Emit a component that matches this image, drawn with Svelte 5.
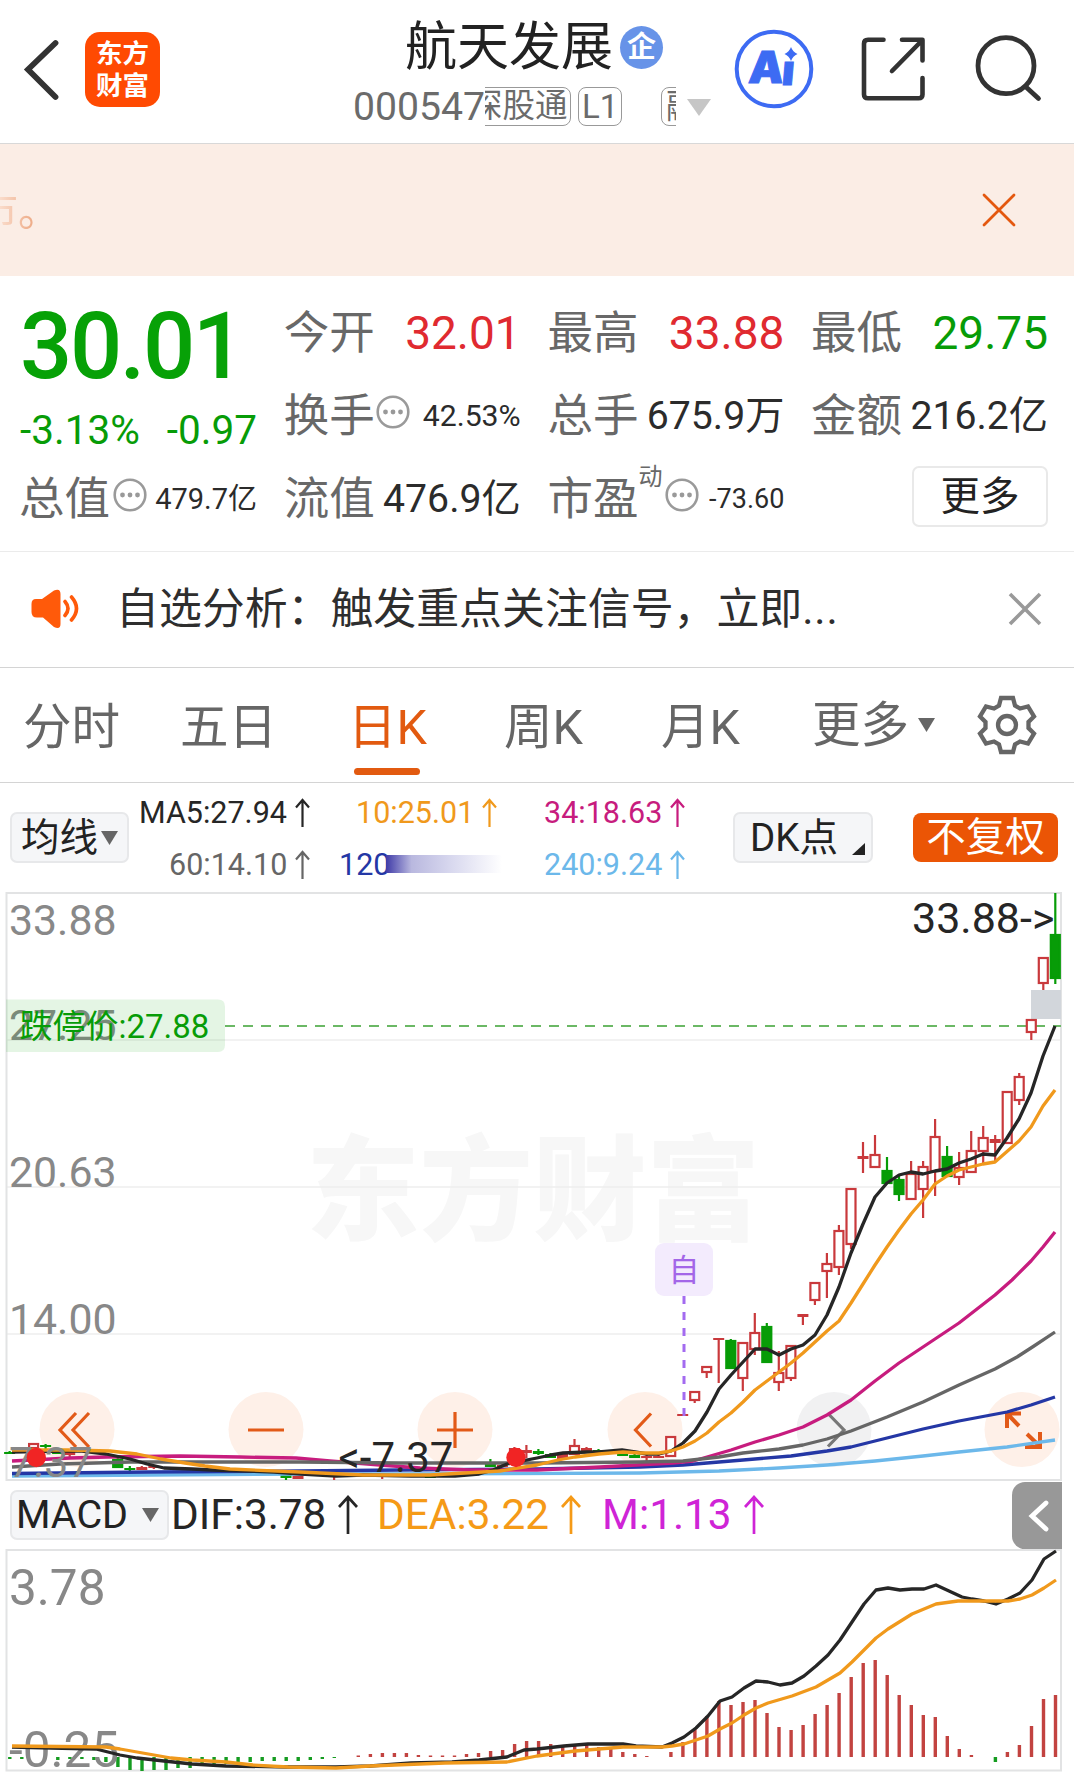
<script lang="ts">
  type Candle = [k: number, high: number, top: number, bottom: number, low: number, up?: boolean];

  const STEP = 12.02;
  const LAST_X = 1055.3;
  const xAt = (k: number) => +(LAST_X - k * STEP).toFixed(1);

  const quotes = [
    { cells: [
      { label: '今开', value: '32.01', tone: 'red', size: 'lg' },
      { label: '最高', value: '33.88', tone: 'red', size: 'lg' },
      { label: '最低', value: '29.75', tone: 'green', size: 'lg' },
    ] },
    { cells: [
      { label: '换手', value: '42.53%', tone: '', size: 'sm', info: true },
      { label: '总手', value: '675.9万', tone: '', size: 'md' },
      { label: '金额', value: '216.2亿', tone: '', size: 'md' },
    ] },
  ];

  const averages = [
    { text: 'MA5:27.94', cls: 'ma5' },
    { text: '10:25.01', cls: 'ma10' },
    { text: '34:18.63', cls: 'ma34' },
    { text: '60:14.10', cls: 'ma60' },
    { text: '120', cls: 'ma120', masked: true },
    { text: '240:9.24', cls: 'ma240' },
  ];

  const candles: Candle[] = [
    [0, 893, 934, 979, 984, false],
    [1, 957, 957, 984, 990, true],
    [2, 1019, 1019, 1033, 1040, true],
    [3, 1073, 1076, 1101, 1105, true],
    [4, 1091, 1091, 1144, 1144, true],
    [5, 1135, 1139, 1143, 1161, true],
    [6, 1126, 1137, 1152, 1163, true],
    [7, 1131, 1150, 1173, 1173, true],
    [8, 1152, 1167, 1178, 1185, true],
    [9, 1146, 1156, 1177, 1177, false],
    [10, 1119, 1136, 1172, 1196, true],
    [11, 1161, 1166, 1190, 1218, true],
    [12, 1161, 1173, 1200, 1200, true],
    [13, 1176, 1179, 1195, 1201, false],
    [14, 1157, 1170, 1184, 1184, false],
    [15, 1135, 1154, 1168, 1168, true],
    [16, 1142, 1156, 1159, 1173, true],
    [17, 1188, 1188, 1245, 1249, true],
    [18, 1225, 1230, 1268, 1275, true],
    [19, 1253, 1263, 1272, 1298, true],
    [20, 1282, 1282, 1301, 1305, true],
    [21, 1314, 1314, 1317, 1325, true],
    [22, 1345, 1345, 1379, 1381, true],
    [23, 1351, 1372, 1383, 1391, true],
    [24, 1323, 1326, 1363, 1363, false],
    [25, 1313, 1332, 1350, 1355, true],
    [26, 1342, 1342, 1379, 1391, true],
    [27, 1339, 1340, 1369, 1369, false],
    [28, 1338, 1338, 1340, 1383, true],
    [29, 1366, 1366, 1373, 1378, true],
    [30, 1391, 1391, 1401, 1403, true],
    [31, 1414, 1414, 1416, 1416, true],
    [32, 1436, 1436, 1457, 1457, true],
    [33, 1455, 1456, 1458, 1458, true],
    [34, 1454, 1456, 1458, 1461, true],
    [35, 1454, 1455, 1458, 1458, false],
    [36, 1452, 1453, 1456, 1456, false],
    [37, 1450, 1450, 1453, 1453, false],
    [38, 1449, 1450, 1452, 1452, false],
    [39, 1447, 1448, 1451, 1451, true],
    [40, 1439, 1445, 1455, 1455, true],
    [41, 1454, 1454, 1459, 1459, true],
    [42, 1453, 1454, 1458, 1458, false],
    [43, 1449, 1451, 1454, 1455, false],
    [44, 1445, 1450, 1453, 1458, true],
    [45, 1447, 1448, 1451, 1451, true],
    [46, 1464, 1465, 1467, 1467, true],
    [47, 1459, 1462, 1467, 1467, false],
    [50, 1475, 1476, 1477, 1477, true],
    [51, 1475, 1476, 1477, 1477, true],
    [52, 1474, 1476, 1478, 1478, false],
    [56, 1475, 1476, 1477, 1479, true],
    [60, 1475, 1476, 1477, 1480, true],
    [63, 1476, 1476, 1479, 1479, true],
    [64, 1474, 1475, 1478, 1480, false],
    [75, 1465, 1466, 1468, 1469, true],
    [76, 1466, 1467, 1470, 1470, true],
    [77, 1466, 1468, 1470, 1471, false],
    [78, 1458, 1459, 1468, 1468, false],
    [82, 1452, 1452, 1455, 1458, true],
    [83, 1451, 1452, 1454, 1454, false],
    [84, 1444, 1445, 1447, 1449, false],
    [85, 1443, 1443, 1449, 1449, true],
    [87, 1451, 1452, 1454, 1454, false],
  ];

  const lines = [
    { cls: 'ma240', pts: '12,1476 150,1475 300,1474 400,1474 640,1473 719,1471 779,1468 827,1465 875,1461 923,1456 959,1452 1007,1447 1055,1440' },
    { cls: 'ma120', pts: '12,1473.5 150,1472 300,1471 400,1470 537,1469 640,1467 683,1465 743,1460 791,1456 827,1451 851,1447 887,1438 923,1429 959,1421 1007,1412 1031,1405 1055,1397' },
    { cls: 'ma34', pts: '12,1461 70,1458 107,1457 180,1456 240,1457 296,1458 330,1461 380,1465 420,1468 470,1470 537,1470 600,1467 673,1463 693,1461 707,1457 731,1450 755,1442 779,1435 803,1427 827,1415 851,1400 875,1381 899,1363 935,1339 959,1323 995,1295 1012,1280 1031,1261 1043,1247 1055,1232' },
    { cls: 'ma60', pts: '12,1467 60,1464 130,1462 300,1462 400,1463 537,1463 640,1462 683,1461 719,1457 743,1453 779,1449 803,1445 827,1439 851,1431 887,1417 923,1402 959,1385 995,1369 1017,1357 1034,1346 1055,1332' },
    { cls: 'ma5', pts: '12,1452 65,1451 82,1451 106,1454 130,1459 147,1464 164,1468 192,1469 212,1470 274,1472 301,1474 336,1476 363,1475 411,1476 455,1476 479,1474 493,1470 507,1464 537,1458 551,1455 563,1453 587,1452 599,1452 622,1450 635,1452 647,1454 659,1454 671,1451 683,1443 695,1431 707,1412 719,1389 731,1375 743,1362 755,1349 767,1349 779,1355 791,1349 803,1345 815,1335 827,1315 839,1287 851,1253 863,1224 875,1197 887,1183 899,1175 911,1172 923,1174 935,1171 947,1169 959,1163 971,1159 983,1154 995,1155 1007,1138 1019,1119 1031,1093 1043,1056 1055,1026' },
    { cls: 'ma10', pts: '12,1450 68,1450 110,1451 137,1454 161,1459 185,1463 205,1466 230,1469 300,1472 363,1475 430,1475 500,1471 537,1465 558,1460 575,1457 599,1454 623,1452 640,1453 659,1453 671,1451 683,1447 695,1441 707,1433 719,1422 731,1413 743,1402 755,1390 767,1381 779,1372 791,1363 803,1353 815,1342 827,1331 839,1321 851,1303 863,1284 875,1265 887,1247 899,1230 911,1214 923,1200 935,1184 947,1176 959,1170 971,1167 983,1164 995,1162 1019,1141 1031,1127 1043,1106 1055,1090' },
  ];

  const ZERO = 1757;
  // Histogram values in pixels above (+) or below (-) the zero line, newest first.
  const bars = [
    62, 58, 31, 12, 5, -5, 0, 2, 8, 21, 40, 42, 52, 62, 82, 97, 94, 80, 64, 52, 43, 32, 27, 30, 44, 57, 55, 52,
    56, 41, 28, 15, 5, 0, 1, 3, 5, 8, 10, 13, 13, 12, 13, 16, 16, 13, 7, 6, 4, 3, 1.5, 1.5, 1.5, 2, 4, 4, 4, 3,
    1.5, 0, -1, -2, -3, -4, -4, -4, -4, -5, -7, -7, -9, -9, -11, -11, -13, -13, -14, -13, -10, -5, -3, -2, -2,
    -3, 0, 0, -2, -2,
  ];
  const dif = '12,1747 51,1748 96,1749 120,1755 137,1758 164,1761 192,1764 226,1766 288,1767 336,1767 370,1766 411,1763 452,1762 479,1760 507,1757 524,1750 537,1749 564,1746 588,1744 623,1744 636,1746 662,1747 672,1743 684,1737 696,1728 708,1716 720,1701 732,1697 744,1688 756,1681 768,1682 780,1685 792,1683 804,1676 816,1666 828,1655 840,1640 852,1622 864,1604 876,1590 888,1588 900,1590 912,1589 924,1589 936,1585 962,1597 972,1599 984,1601 996,1604 1008,1599 1020,1593 1032,1580 1044,1559 1056,1551';
  const dea = '12,1746 106,1747 120,1749 154,1755 171,1758 192,1760 226,1762 253,1765 288,1767 336,1768 370,1766 445,1763 507,1762 537,1756 575,1751 623,1747 662,1747 672,1746 684,1744 696,1740 708,1736 720,1729 732,1723 744,1715 756,1708 768,1703 792,1696 816,1687 840,1673 852,1662 876,1638 888,1629 912,1614 936,1604 958,1601 984,1601 1008,1601 1020,1599 1032,1595 1044,1588 1056,1580';

  const controls = [77, 266, 455, 645, 834, 1022];
</script>

{#snippet dots()}
  <svg class="dots" width="34" height="34" viewBox="0 0 34 34">
    <circle cx="17" cy="17" r="15.3" fill="none" stroke="#9a9a9a" stroke-width="2.6" />
    <g fill="#999"><circle cx="9.5" cy="17" r="2.4" /><circle cx="17" cy="17" r="2.4" /><circle cx="24.5" cy="17" r="2.4" /></g>
  </svg>
{/snippet}

{#snippet arrow(w: number, h: number, sw: number)}
  <svg class="arrow" width={w} height={h} viewBox="0 0 {w} {h}">
    <path d="M{w / 2} {h}V2M1 {w / 2 + 2}L{w / 2} 2L{w - 1} {w / 2 + 2}" fill="none" stroke="currentColor" stroke-width={sw} />
  </svg>
{/snippet}

<main class="page">
  <header class="top">
    <svg class="back" width="40" height="70" viewBox="22 35 40 70"><path d="M55.500 43L28 69.500L55.500 97" fill="none" stroke="#333" stroke-width="5.800" stroke-linecap="round" /></svg>
    <div class="logo"><span>东方</span><span>财富</span></div>
    <div class="heading">
      <div class="name"><h1>航天发展</h1><span class="corp">企</span></div>
      <div class="meta">
        <span class="code">000547</span>
        <div class="tags"><span class="tag first">深股通</span><span class="tag level">L1</span><span class="tag margin">融</span></div>
        <svg width="24" height="17" viewBox="0 0 24 17"><path d="M0 0H24L12 17Z" fill="#c6c6c6" /></svg>
      </div>
    </div>
    <svg class="ai" width="80" height="80" viewBox="734 29 80 80">
      <circle cx="774" cy="69" r="37.300" fill="none" stroke="#3d6bf3" stroke-width="4" />
      <g transform="skewX(-5)">
        <text x="755" y="83" class="ai-text">A</text>
        <text x="788.500" y="85.500" class="ai-text i">ı</text>
      </g>
      <path d="M791 47Q792.800 52 797.500 54Q792.800 56 791 61Q789.200 56 784.500 54Q789.200 52 791 47Z" fill="#3d6bf3" />
    </svg>
    <svg class="share" width="70" height="70" viewBox="858 34 70 70">
      <path d="M883.500 39.800H868Q864 39.800 864 43.800V94.500Q864 98.300 868 98.300H918.500Q922.500 98.300 922.500 94.500V78M902 39.800H922.500V60.500M922 40.500L892 71" fill="none" stroke="#333" stroke-width="4.600" stroke-linecap="round" stroke-linejoin="round" />
    </svg>
    <svg class="search" width="70" height="70" viewBox="974 34 70 70">
      <circle cx="1006" cy="65.700" r="28" fill="none" stroke="#333" stroke-width="4.800" /><path d="M1026 87L1038.500 98.500" stroke="#333" stroke-width="4.800" stroke-linecap="round" />
    </svg>
  </header>

  <section class="banner">
    <div class="ticker">市。</div>
    <svg width="34" height="34" viewBox="0 0 34 34"><path d="M2 2L32 32M32 2L2 32" stroke="#e4580f" stroke-width="2.800" stroke-linecap="round" /></svg>
  </section>

  <section class="quote">
    <div class="price">30.01</div>
    {#each quotes[0].cells as c}
      <div class="cell"><span class="label">{c.label}</span><span class="value {c.size} {c.tone}">{c.value}</span></div>
    {/each}
    <div class="change"><span>-3.13%</span><span>-0.97</span></div>
    {#each quotes[1].cells as c}
      <div class="cell"><span class="label">{c.label}</span>{#if c.info}{@render dots()}{/if}<span class="value {c.size}">{c.value}</span></div>
    {/each}
    <div class="cell total"><span class="label">总值</span>{@render dots()}<span class="value s29">479.7亿</span></div>
    <div class="cell"><span class="label">流值</span><span class="value md">476.9亿</span></div>
    <div class="cell"><span class="label">市盈</span><sup>动</sup>{@render dots()}<span class="value s27">-73.60</span></div>
    <div class="cell end"><button class="more">更多</button></div>
  </section>

  <section class="notice">
    <svg width="50" height="42" viewBox="30 588 50 42">
      <path d="M36 599H42L54 590.500Q60.500 588 60.500 594V624Q60.500 630 54 627L43 617.500H37Q31.500 617.500 31.500 612V604Q31.500 599 36 599Z" fill="#ff5a0a" />
      <path d="M65 601.500Q71 608.500 65 615.500M71.500 597Q81.500 608.500 71.500 620" fill="none" stroke="#ff5a0a" stroke-width="3.600" stroke-linecap="round" />
    </svg>
    <p>自选分析：触发重点关注信号，立即<span class="ellipsis">...</span></p>
    <svg width="34" height="34" viewBox="0 0 34 34"><path d="M2 2L32 32M32 2L2 32" stroke="#999" stroke-width="3.600" /></svg>
  </section>

  <nav class="tabs">
    <span class="t1">分时</span><span class="t2">五日</span><span class="t3 active">日K</span><span class="t4">周K</span><span class="t5">月K</span>
    <span class="t6">更多<svg width="17" height="14" viewBox="0 0 17 14"><path d="M0 0H17L8.500 14Z" fill="#666" /></svg></span>
    <svg class="gear" width="60" height="60" viewBox="-30 -30 60 60">
      <path d="M-6 -27H6L8 -19.500L13 -16.500L21 -18.500L27 -8.500L21.500 -3V3L27 8.500L21 18.500L13 16.500L8 19.500L6 27H-6L-8 19.500L-13 16.500L-21 18.500L-27 8.500L-21.500 3V-3L-27 -8.500L-21 -18.500L-13 -16.500L-8 -19.500Z" fill="none" stroke="#666" stroke-width="4.300" />
      <circle r="9" fill="none" stroke="#666" stroke-width="4.300" />
    </svg>
  </nav>

  <section class="indicators">
    <button class="pill ma-pick">均线<svg width="17" height="14" viewBox="0 0 17 14"><path d="M0 0H17L8.500 14Z" fill="#666" /></svg></button>
    <div class="averages">
      {#each averages as a}
        <span class="avg {a.cls}">{a.text}{#if a.masked}<i class="fade"></i>{:else}{@render arrow(15, 29, 2.2)}{/if}</span>
      {/each}
    </div>
    <button class="pill dk">DK点<svg width="13" height="12" viewBox="0 0 13 12"><path d="M13 0V12H0Z" fill="#222" /></svg></button>
    <button class="adjust">不复权</button>
  </section>

  <svg class="kline" width="1074" height="596" viewBox="0 885 1074 596">
    <text x="306" y="1231" class="watermark">东方财富</text>
    <path d="M6 1040H1061M6 1187H1061M6 1334H1061" stroke="#eeeeee" stroke-width="1.500" />
    <path d="M6.500 893V1480H1061V893Z" fill="none" stroke="#e2e3e4" stroke-width="2" />
    {#each controls as cx, i}
      <circle {cx} cy="1429.500" r="37.500" fill={i === 4 ? '#f1f1f2' : '#fef0e8'} />
    {/each}
    <g class="axis">
      <text x="9" y="935">33.88</text><text x="9" y="1040">27.25</text><text x="9" y="1187">20.63</text><text x="9" y="1334">14.00</text>
    </g>
    <path d="M6 999.500H218Q225 999.500 225 1006.500V1045Q225 1052 218 1052H6Z" fill="#09a109" fill-opacity=".11" />
    <path d="M225 1026H1061" stroke="#6bb865" stroke-width="1.800" stroke-dasharray="10 8" />
    <text x="19.500" y="1037.500" class="limit">跌停价:27.88</text>
    <rect x="1031" y="990" width="30" height="29" fill="#d2d6db" />
    <g class="icon" fill="none" stroke="#e25a18" stroke-width="3.200">
      <path d="M76 1413L60 1430L76 1447M89 1413L73 1430L89 1447" />
      <path d="M248 1430H284M437 1430H473M455 1412V1448" />
      <path d="M651 1413.500L635.500 1430L651 1446.500" />
      <path d="M828 1413.500L844 1430L828 1446.500" stroke="#777" />
      <path d="M1021 1413.500H1007V1428M1007.500 1414L1019 1426M1025 1447H1040V1432M1039.500 1446L1027 1434" stroke-width="4" />
    </g>
    {#each candles as [k, high, top, bottom, low, up]}
      {@const x = xAt(k)}
      <g stroke={up ? '#c9393c' : '#079c07'} stroke-width="2.200">
        {#if high < top}<path d="M{x} {high}V{top}" />{/if}
        {#if low > bottom}<path d="M{x} {bottom}V{low}" />{/if}
        {#if bottom - top > 5}
          <rect x={x - 4.500} y={top + 1} width="9" height={bottom - top - 2} fill={up ? '#fff' : '#079c07'} />
        {:else}
          <rect x={x - 5.500} y={top} width="11" height={bottom - top} fill={up ? '#c9393c' : '#079c07'} stroke="none" />
        {/if}
      </g>
    {/each}
    {#each lines as l}
      <polyline class="line {l.cls}" points={l.pts} />
    {/each}
    <text x="9" y="1476.500" class="low-axis">7.37</text>
    <circle cx="36.300" cy="1457.500" r="9.700" fill="#f12424" /><circle cx="516" cy="1457.500" r="9.700" fill="#f12424" />
    <text x="338.500" y="1472" class="mark low">&lt;-7.37</text>
    <text x="912" y="933" class="mark">33.88-&gt;</text>
    <path d="M684 1296V1416" stroke="#a36bf0" stroke-width="3" stroke-dasharray="8 8" />
    <rect x="655" y="1243" width="58" height="53" rx="9" fill="#f3ebfd" />
    <text x="684" y="1280.500" class="self">自</text>
  </svg>

  <section class="macd-bar">
    <button class="pill macd">MACD<svg width="17" height="14" viewBox="0 0 17 14"><path d="M0 0H17L8.500 14Z" fill="#666" /></svg></button>
    <span class="reading d1">DIF:3.78{@render arrow(20, 39, 2.7)}</span>
    <span class="reading d2">DEA:3.22{@render arrow(20, 39, 2.7)}</span>
    <span class="reading d3">M:1.13{@render arrow(20, 39, 2.7)}</span>
    <button class="drawer" aria-label="展开"><svg width="22" height="32" viewBox="0 0 22 32"><path d="M18 3L4 16L18 29" fill="none" stroke="#fff" stroke-width="4.800" stroke-linecap="round" /></svg></button>
  </section>

  <svg class="macd-chart" width="1074" height="228" viewBox="0 1549 1074 228">
    <path d="M6.500 1550H1061V1770.500H6.500Z" fill="none" stroke="#e2e3e4" stroke-width="2" />
    {#each bars as v, k}
      <rect x={xAt(k) - 1.500} y={v > 0 ? ZERO - v : ZERO} width="3.400" height={Math.abs(v)} fill={v > 0 ? '#c24340' : '#159c20'} />
    {/each}
    <g class="axis big"><text x="9" y="1605">3.78</text><text x="9" y="1766.500">-0.25</text></g>
    <polyline class="line ma5" points={dif} />
    <polyline class="line ma10" points={dea} />
  </svg>
</main>

<style>
  :global(body) { margin: 0; background: #fff; }
  .page { width: 1074px; height: 1777px; overflow: hidden; background: #fff; font-family: Roboto, 'Noto Sans CJK SC', sans-serif; color: #2b2b2b; }
  svg { display: block; flex: none; }
  button { border: 0; padding: 0; margin: 0; font: inherit; color: inherit; background: none; }
  .red { color: #e02a30; }
  .green { color: #079c07; }

  .top { box-sizing: border-box; height: 144px; border-bottom: 1px solid #d8d8d8; display: flex; align-items: flex-start; padding-left: 22px; }
  .back { margin-top: 35px; }
  .logo { box-sizing: border-box; width: 75px; height: 75px; margin: 32px 0 0 23px; border-radius: 15px; background: #ff4a02; color: #fff; font-family: 'Noto Sans CJK SC', sans-serif; font-weight: 700; font-size: 26.500px; line-height: 32px; display: flex; flex-direction: column; align-items: center; padding-top: 4px; }
  .heading { width: 360px; margin: 17px 0 0 194px; }
  .name { display: flex; align-items: center; height: 61px; padding-left: 51px; }
  h1 { margin: 0; font-size: 52px; line-height: 61px; font-weight: 400; color: #222; }
  .corp { width: 43px; height: 43px; margin-left: 7px; border-radius: 50%; background: #6793e8; color: #fff; font-size: 29px; line-height: 42px; font-weight: 700; text-align: center; }
  .meta { display: flex; align-items: center; height: 60px; color: #6b6b6b; margin-top: -1px; }
  .code { width: 132px; margin-left: -1px; flex: none; font-size: 39.200px; white-space: nowrap; }
  .tags { width: 191px; height: 40px; flex: none; overflow: hidden; display: flex; margin-right: 11px; }
  .tag { box-sizing: border-box; flex: none; height: 39px; border: 1.500px solid #999; border-radius: 8px; font-size: 33px; line-height: 37px; white-space: nowrap; }
  .first { width: 108px; margin-left: -22px; padding-left: 6px; font-size: 32.500px; }
  .level { width: 44px; margin-left: 7px; padding-left: 3px; }
  .margin { width: 80px; margin-left: 39px; padding-left: 4px; }
  .ai { margin: 29px 0 0 20px; }
  .ai-text { font: 900 44px Inter, sans-serif; fill: #3d6bf3; stroke: #3d6bf3; stroke-width: 1; }
  .ai-text.i { font-size: 42px; }
  .share { margin: 34px 0 0 44px; }
  .search { margin: 34px 0 0 46px; }

  .banner { box-sizing: border-box; height: 132px; background: #fbede5; display: flex; align-items: center; justify-content: space-between; padding-right: 58px; }
  .ticker { width: 60px; overflow: hidden; text-indent: -24px; white-space: nowrap; font-size: 42px; line-height: 56px; color: transparent; background: linear-gradient(90deg, #fadccb, #e3834f 60px); -webkit-background-clip: text; background-clip: text; padding-top: 4px; }

  .quote { box-sizing: border-box; height: 276px; border-bottom: 1px solid #ebebeb; padding: 15px 0 0 20px; display: grid; grid-template-columns: 237px 236px 236px 236px; grid-template-rows: 83px 83px 83px; column-gap: 27.700px; align-content: start; }
  .price { font-size: 92px; font-weight: 500; line-height: 111px; letter-spacing: -2.400px; color: #07a107; }
  .change { display: flex; justify-content: space-between; font-size: 40.500px; line-height: 112px; color: #079c07; height: 83px; }
  .cell { display: flex; align-items: center; height: 83px; white-space: nowrap; }
  .label { font-size: 45.500px; line-height: 60px; color: #686868; margin: 3px 0 0 -1px; }
  .value { margin-left: auto; line-height: 60px; }
  .lg { font-size: 46px; }
  .md { font-size: 39.200px; }
  .sm { font-size: 30.200px; }
  .s29 { font-size: 29px; }
  .s27 { font-size: 27px; }
  .dots { margin: -7px 0 0 1px; }
  .total .dots { margin-left: 3px; }
  sup { font-size: 24px; line-height: 28px; color: #686868; align-self: flex-start; margin-top: 6px; }
  sup + .dots { margin-left: 3px; }
  .end { justify-content: flex-end; }
  .more { box-sizing: border-box; width: 136px; height: 61px; border: 2px solid #e9e9e9; border-radius: 7px; font-size: 39.500px; line-height: 57px; color: #222; margin-top: -4px; }

  .notice { box-sizing: border-box; height: 116px; border-bottom: 1px solid #d4d4d4; display: flex; align-items: center; padding: 0 32px 2px 30px; }
  .notice p { margin: 0 auto 0 36px; font-size: 42.900px; line-height: 60px; color: #2e2e2e; white-space: nowrap; }
  .ellipsis { letter-spacing: .8px; }

  .tabs { box-sizing: border-box; height: 115px; border-bottom: 1px solid #d4d4d4; display: grid; grid-template-columns: 157px 168px 156px 157px 151px 140px 1fr; padding-left: 23px; align-items: center; color: #666; font-size: 48.500px; line-height: 115px; height: 115px; white-space: nowrap; }
  .tabs > span { height: 111px; }
  .t6 { display: flex; align-items: center; }
  .t6 svg { margin-left: 9px; }
  .active { position: relative; color: #e25a10; }
  .active::after { content: ''; position: absolute; left: 6px; bottom: 6px; width: 66px; height: 7px; border-radius: 4px; background: #e25a10; }
  .gear { margin-left: 25px; }

  .indicators { height: 102px; display: flex; align-items: flex-start; padding-left: 10px; }
  .pill { box-sizing: border-box; display: flex; align-items: center; height: 51px; margin-top: 29px; border: 2px solid #e7e8ea; border-radius: 7px; background: #f5f6f8; font-size: 38.500px; line-height: 46px; color: #222; white-space: nowrap; }
  .ma-pick { width: 119px; padding-left: 9px; }
  .ma-pick svg { margin-left: 3px; }
  .averages { width: 604px; display: grid; grid-template-columns: 188px 180px 185px; grid-template-rows: 52px 52px; padding: 3px 0 0 10px; box-sizing: border-box; }
  .avg { display: flex; align-items: center; height: 52px; font-size: 30.500px; white-space: nowrap; }
  .avg .arrow { margin-left: 8px; }
  .avg.ma60 { padding-left: 30px; }
  .avg.ma10 { padding-left: 29px; }
  .avg.ma120 { padding-left: 12px; }
  .avg.ma34, .avg.ma240 { padding-left: 37px; }
  .fade { width: 116px; height: 18px; margin-left: -4px; background: linear-gradient(90deg, #403ba8, #b9b8df 22%, #d7d7ee 55%, #fff); }
  .ma5 { color: #262626; stroke: #262626; }
  .ma10 { color: #f0991c; stroke: #f0991c; }
  .ma34 { color: #c71c7e; stroke: #c71c7e; }
  .ma60 { color: #666; stroke: #666; }
  .ma120 { color: #2437a5; stroke: #2437a5; }
  .ma240 { color: #6cb8ea; stroke: #6cb8ea; }
  .dk { width: 140px; padding-left: 15px; }
  .dk svg { margin: 22px 0 0 14px; }
  .adjust { width: 145px; height: 49px; margin: 30px 0 0 40px; border-radius: 8px; background: #eb5505; color: #fff; font-size: 39.500px; line-height: 49px; text-align: center; }

  .line { fill: none; stroke-width: 3.300; stroke-linejoin: round; }
  .axis, .low-axis { font-size: 42.800px; fill: #888; }
  .axis.big { font-size: 49.500px; }
  .mark { font-size: 43px; fill: #262626; }
  .mark.low { font-size: 42px; }
  .limit { font-size: 33px; fill: #079c07; }
  .self { font-size: 31px; fill: #a366e8; text-anchor: middle; }
  .watermark { font: 900 113.500px 'Noto Sans CJK SC', sans-serif; fill: #f7f7f7; }

  .macd-bar { height: 68px; display: flex; align-items: flex-start; padding-left: 10px; }
  .macd { width: 159px; height: 50px; margin-top: 9px; padding-left: 4px; font-size: 39.500px; }
  .macd svg { margin-left: 14px; }
  .reading { display: flex; align-items: center; height: 67px; font-size: 42.300px; white-space: nowrap; }
  .reading .arrow { margin-left: 12px; }
  .d1 { width: 206px; color: #262626; padding-left: 2px; }
  .d2 { width: 225px; color: #f59a17; }
  .d3 { color: #cf24d6; }
  .drawer { width: 50px; height: 67px; margin: 1px 12px 0 auto; border-radius: 13px 0 0 13px; background: #989898; display: flex; align-items: center; padding-left: 16px; box-sizing: border-box; }
</style>
